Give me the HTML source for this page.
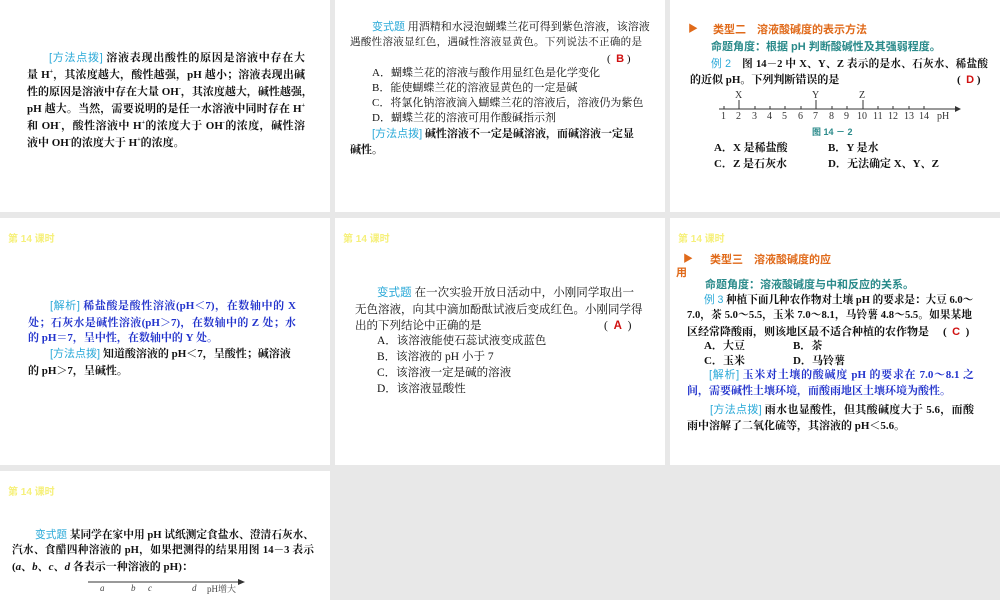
<!DOCTYPE html>
<html><head><meta charset="utf-8"><style>
body{margin:0;width:1000px;height:600px;background:#e8e8e8;position:relative;overflow:hidden;font-family:"Liberation Serif","Noto Serif CJK SC",serif;}
.s{position:absolute;background:#fff;}
.l{position:absolute;font-size:11px;line-height:16px;height:16px;color:#111;font-weight:bold;white-space:nowrap;}
.j{text-align:justify;text-align-last:justify;}
.n{font-weight:normal}
.h{position:absolute;left:8px;top:12px;font-size:10px;color:#f6f07a;font-family:"Liberation Sans","Noto Sans CJK SC",sans-serif;font-weight:bold;}
.c{color:#2aa9d8;font-family:"Liberation Sans","Noto Sans CJK SC",sans-serif;font-weight:normal;}
.b{color:#2233cc;}
.o{color:#e06a1a;font-family:"Liberation Sans","Noto Sans CJK SC",sans-serif;}
.g{color:#2a8a8a;font-family:"Liberation Sans","Noto Sans CJK SC",sans-serif;}
.r{color:#d01010;font-family:"Liberation Sans",sans-serif;font-weight:bold}
sup{font-size:6px;line-height:0;vertical-align:5px}
</style></head><body>
<div class="s" style="left:0;top:0;width:330px;height:212px"></div>
<div class="s" style="left:335px;top:0;width:330px;height:212px"></div>
<div class="s" style="left:670px;top:0;width:330px;height:212px"></div>
<div class="s" style="left:0;top:218px;width:330px;height:247px"><div class="h">第 14 课时</div></div>
<div class="s" style="left:335px;top:218px;width:330px;height:247px"><div class="h">第 14 课时</div></div>
<div class="s" style="left:670px;top:218px;width:330px;height:247px"><div class="h">第 14 课时</div></div>
<div class="s" style="left:0;top:471px;width:330px;height:129px"><div class="h">第 14 课时</div></div>

<!-- slide 1 -->
<div class="l j" style="left:49px;top:50px;width:256px"><span class="c">[方法点拨]</span> 溶液表现出酸性的原因是溶液中存在大</div>
<div class="l j" style="left:27px;top:67px;width:278px">量 H<sup>+</sup>，其浓度越大，酸性越强，pH 越小；溶液表现出碱</div>
<div class="l j" style="left:27px;top:84px;width:278px">性的原因是溶液中存在大量 OH<sup>-</sup>，其浓度越大，碱性越强，</div>
<div class="l j" style="left:27px;top:101px;width:278px">pH 越大。当然，需要说明的是任一水溶液中同时存在 H<sup>+</sup></div>
<div class="l j" style="left:27px;top:118px;width:278px">和 OH<sup>-</sup>，酸性溶液中 H<sup>+</sup>的浓度大于 OH<sup>-</sup>的浓度，碱性溶</div>
<div class="l" style="left:27px;top:135px">液中 OH<sup>-</sup>的浓度大于 H<sup>+</sup>的浓度。</div>

<!-- slide 2 -->
<div class="l j n" style="left:372px;top:19px;width:270px"><span class="c">变式题</span> 用酒精和水浸泡蝴蝶兰花可得到紫色溶液，该溶液</div>
<div class="l j n" style="left:350px;top:35px;width:292px;font-size:10.5px">遇酸性溶液显红色，遇碱性溶液显黄色。下列说法不正确的是</div>
<div class="l n" style="left:607px;top:51px">(&nbsp;&nbsp;<span class="r">B</span>&nbsp;)</div>
<div class="l n" style="left:372px;top:65px">A．蝴蝶兰花的溶液与酸作用显红色是化学变化</div>
<div class="l n" style="left:372px;top:80px">B．能使蝴蝶兰花的溶液显黄色的一定是碱</div>
<div class="l n" style="left:372px;top:95px">C．将氯化钠溶液滴入蝴蝶兰花的溶液后，溶液仍为紫色</div>
<div class="l n" style="left:372px;top:110px">D．蝴蝶兰花的溶液可用作酸碱指示剂</div>
<div class="l j" style="left:372px;top:126px;width:262px"><span class="c">[方法点拨]</span> 碱性溶液不一定是碱溶液，而碱溶液一定显</div>
<div class="l" style="left:350px;top:142px">碱性。</div>

<!-- slide 3 -->
<div class="l o" style="left:688px;top:22px;font-size:10px">▶</div>
<div class="l o" style="left:713px;top:22px">类型二　溶液酸碱度的表示方法</div>
<div class="l g" style="left:711px;top:39px">命题角度：根据 pH 判断酸碱性及其强弱程度。</div>
<div class="l j" style="left:711px;top:56px;width:277px;font-size:10.6px"><span class="c">例 2</span>　图 14－2 中 X、Y、Z 表示的是水、石灰水、稀盐酸</div>
<div class="l" style="left:690px;top:72px">的近似 pH。下列判断错误的是</div>
<div class="l" style="left:957px;top:72px">(&nbsp;&nbsp;<span class="r">D</span>&nbsp;)</div>
<svg style="position:absolute;left:715px;top:88px" width="250" height="36" font-family="Liberation Serif" font-size="10" fill="#333">
<line x1="4" y1="21" x2="240" y2="21" stroke="#333"/><polygon points="240,18 246,21 240,24" fill="#333"/>
<g stroke="#333"><line x1="9" y1="18" x2="9" y2="21"/><line x1="24" y1="12" x2="24" y2="21"/><line x1="40" y1="18" x2="40" y2="21"/><line x1="55" y1="18" x2="55" y2="21"/><line x1="70" y1="18" x2="70" y2="21"/><line x1="86" y1="18" x2="86" y2="21"/><line x1="101" y1="12" x2="101" y2="21"/><line x1="117" y1="18" x2="117" y2="21"/><line x1="132" y1="18" x2="132" y2="21"/><line x1="148" y1="12" x2="148" y2="21"/><line x1="163" y1="18" x2="163" y2="21"/><line x1="178" y1="18" x2="178" y2="21"/><line x1="194" y1="18" x2="194" y2="21"/><line x1="209" y1="18" x2="209" y2="21"/></g>
<text x="20" y="10">X</text><text x="97" y="10">Y</text><text x="144" y="10">Z</text>
<text x="6" y="31">1</text><text x="21" y="31">2</text><text x="37" y="31">3</text><text x="52" y="31">4</text><text x="67" y="31">5</text><text x="83" y="31">6</text><text x="98" y="31">7</text><text x="114" y="31">8</text><text x="129" y="31">9</text><text x="142" y="31">10</text><text x="158" y="31">11</text><text x="173" y="31">12</text><text x="189" y="31">13</text><text x="204" y="31">14</text><text x="222" y="31">pH</text></svg>
<div class="l g" style="left:812px;top:124px;font-size:9px">图 14 － 2</div>
<div class="l" style="left:714px;top:140px">A．X 是稀盐酸</div>
<div class="l" style="left:828px;top:140px">B．Y 是水</div>
<div class="l" style="left:714px;top:156px">C．Z 是石灰水</div>
<div class="l" style="left:828px;top:156px">D．无法确定 X、Y、Z</div>

<!-- slide 4 -->
<div class="l j b" style="left:50px;top:298px;width:246px"><span class="c">[解析]</span> 稀盐酸是酸性溶液(pH＜7)，在数轴中的 X</div>
<div class="l j b" style="left:28px;top:315px;width:268px">处；石灰水是碱性溶液(pH＞7)，在数轴中的 Z 处；水</div>
<div class="l b" style="left:28px;top:330px">的 pH＝7，呈中性，在数轴中的 Y 处。</div>
<div class="l j" style="left:50px;top:346px;width:240px"><span class="c">[方法点拨]</span> 知道酸溶液的 pH＜7，呈酸性；碱溶液</div>
<div class="l" style="left:28px;top:363px">的 pH＞7，呈碱性。</div>

<!-- slide 5 -->
<div class="l j n" style="left:377px;top:285px;width:257px;font-size:11.5px"><span class="c">变式题</span> 在一次实验开放日活动中，小刚同学取出一</div>
<div class="l j n" style="left:355px;top:302px;width:279px;font-size:11.5px">无色溶液，向其中滴加酚酞试液后变成红色。小刚同学得</div>
<div class="l n" style="left:355px;top:318px;font-size:11.5px">出的下列结论中正确的是</div>
<div class="l n" style="left:604px;top:318px;font-size:11.5px">(&nbsp;&nbsp;<span class="r">A</span>&nbsp;&nbsp;)</div>
<div class="l n" style="left:377px;top:333px;font-size:11.5px">A．该溶液能使石蕊试液变成蓝色</div>
<div class="l n" style="left:377px;top:349px;font-size:11.5px">B．该溶液的 pH 小于 7</div>
<div class="l n" style="left:377px;top:365px;font-size:11.5px">C．该溶液一定是碱的溶液</div>
<div class="l n" style="left:377px;top:381px;font-size:11.5px">D．该溶液显酸性</div>

<!-- slide 6 -->
<div class="l o" style="left:683px;top:252px;font-size:10px">▶</div>
<div class="l o" style="left:710px;top:252px">类型三　溶液酸碱度的应</div>
<div class="l o" style="left:676px;top:265px">用</div>
<div class="l g" style="left:705px;top:277px">命题角度：溶液酸碱度与中和反应的关系。</div>
<div class="l j" style="left:704px;top:292px;width:268px;font-size:10.6px"><span class="c">例 3</span> 种植下面几种农作物对土壤 pH 的要求是：大豆 6.0～</div>
<div class="l j" style="left:687px;top:308px;width:285px;font-size:10.6px">7.0，茶 5.0～5.5，玉米 7.0～8.1，马铃薯 4.8～5.5。如果某地</div>
<div class="l" style="left:687px;top:324px">区经常降酸雨，则该地区最不适合种植的农作物是</div>
<div class="l" style="left:943px;top:324px">(&nbsp;&nbsp;<span class="r">C</span>&nbsp;&nbsp;)</div>
<div class="l" style="left:704px;top:338px">A．大豆</div><div class="l" style="left:793px;top:338px">B．茶</div>
<div class="l" style="left:704px;top:353px">C．玉米</div><div class="l" style="left:793px;top:353px">D．马铃薯</div>
<div class="l j b" style="left:709px;top:367px;width:265px"><span class="c">[解析]</span> 玉米对土壤的酸碱度 pH 的要求在 7.0～8.1 之</div>
<div class="l b" style="left:687px;top:383px">间，需要碱性土壤环境，而酸雨地区土壤环境为酸性。</div>
<div class="l j" style="left:710px;top:402px;width:264px"><span class="c">[方法点拨]</span> 雨水也显酸性，但其酸碱度大于 5.6，而酸</div>
<div class="l" style="left:687px;top:418px">雨中溶解了二氧化硫等，其溶液的 pH＜5.6。</div>

<!-- slide 7 -->
<div class="l j" style="left:35px;top:527px;width:279px;font-size:10.7px"><span class="c">变式题</span> 某同学在家中用 pH 试纸测定食盐水、澄清石灰水、</div>
<div class="l j" style="left:12px;top:543px;width:302px;font-size:10.6px">汽水、食醋四种溶液的 pH，如果把测得的结果用图 14－3 表示</div>
<div class="l" style="left:12px;top:559px">(<i>a</i>、<i>b</i>、<i>c</i>、<i>d</i> 各表示一种溶液的 pH)：</div>
<svg style="position:absolute;left:88px;top:576px" width="160" height="20" font-family="Liberation Serif" font-size="9" fill="#444"><line x1="0" y1="6" x2="152" y2="6" stroke="#333"/><polygon points="150,3 157,6 150,9" fill="#333"/><text x="12" y="15" font-style="italic">a</text><text x="43" y="15" font-style="italic">b</text><text x="60" y="15" font-style="italic">c</text><text x="104" y="15" font-style="italic">d</text><text x="119" y="16" font-family="Liberation Serif,Noto Serif CJK SC">pH增大</text></svg>
</body></html>
